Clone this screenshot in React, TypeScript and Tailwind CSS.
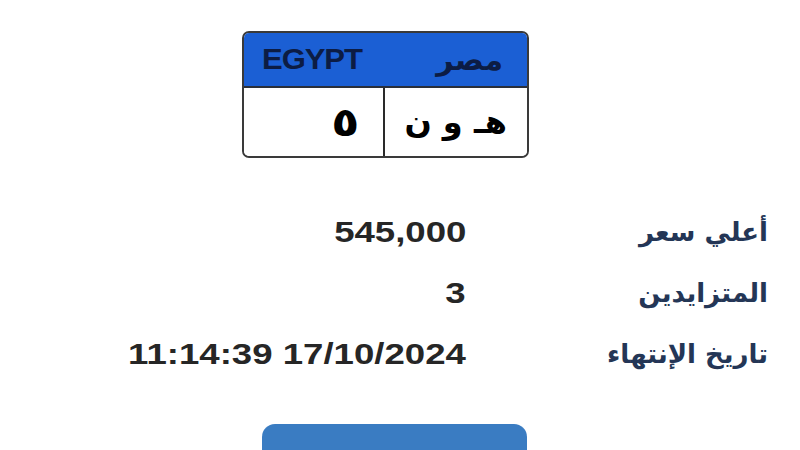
import React from "react";

const rows = [
  { label: "أعلي سعر", value: "545,000" },
  { label: "المتزايدين", value: "3" },
  { label: "تاريخ الإنتهاء", value: "11:14:39 17/10/2024" },
];

export default function App() {
  return (
    <div
      className="w-[800px] h-[450px] bg-white overflow-hidden flex flex-col"
      style={{ fontFamily: '"Liberation Sans", "DejaVu Sans", sans-serif' }}
    >
      {/* Plate */}
      <div className="shrink-0 ml-[242px] mt-[31px] w-[287px] h-[127px] border-2 border-[#3a3a3a] rounded-[7px] overflow-hidden flex flex-col">
        <div className="shrink-0 h-[55px] bg-[#1b5fd4] border-b-2 border-[#2a2f3a] flex items-center justify-between pl-[18px] pr-[24px]">
          <span className="inline-block text-[29px] font-bold text-[#0c1c44] tracking-[-1px] scale-x-[1.07] origin-left leading-none">
            EGYPT
          </span>
          <span
            dir="rtl"
            className="text-[30px] font-bold text-[#0c1c44] leading-none"
            style={{ fontFamily: '"DejaVu Sans", sans-serif' }}
          >
            مصر
          </span>
        </div>
        <div className="flex-1 flex bg-white">
          <div className="w-[141px] border-r-2 border-[#2a2a2a] flex items-center justify-end pr-[26px]">
            <span
              className="inline-block text-[40px] font-bold text-black leading-none scale-x-[1.15]"
              style={{ fontFamily: '"DejaVu Sans", sans-serif' }}
            >
              ٥
            </span>
          </div>
          <div className="flex-1 flex items-center justify-end pr-[20px]">
            <span
              dir="rtl"
              className="text-[32px] font-bold text-black leading-none tracking-[1px]"
              style={{ fontFamily: '"DejaVu Sans", sans-serif' }}
            >
              هـ و ن
            </span>
          </div>
        </div>
      </div>

      {/* Info rows */}
      <div className="shrink-0 mt-[43px] flex flex-col">
        {rows.map((r) => (
          <div key={r.label} className="h-[61px] flex items-center">
            <div className="w-[466px] flex justify-end">
              <span className="inline-block text-[30px] font-bold text-[#262626] leading-none scale-x-[1.22] origin-right">
                {r.value}
              </span>
            </div>
            <div className="flex-1 flex justify-end pr-[32px]">
              <span
                dir="rtl"
                className="text-[26px] font-bold text-[#243656] leading-none"
                style={{ fontFamily: '"DejaVu Sans", sans-serif' }}
              >
                {r.label}
              </span>
            </div>
          </div>
        ))}
      </div>

      {/* Button */}
      <div className="shrink-0 mt-[40px] ml-[262px] w-[265px] h-[40px] rounded-t-[13px] bg-[#3a7cc2]" />
    </div>
  );
}
